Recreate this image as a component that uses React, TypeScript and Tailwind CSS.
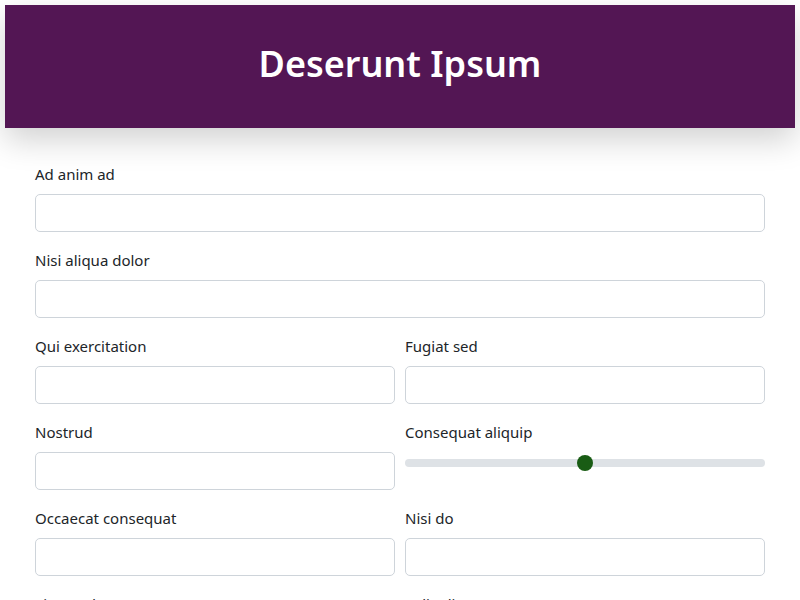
import { useState } from 'react';

const font = { fontFamily: '"Noto Sans", "Open Sans", sans-serif' };

function Field({ label }: { label: string }) {
    return (
        <div className="flex flex-col">
            <label className="text-[15px] leading-6 text-[#212529] mb-2">{label}</label>
            <input
                type="text"
                className="h-[38px] w-full rounded-[5px] border border-[#ced4da] bg-white px-3 outline-none"
            />
        </div>
    );
}

function RangeField({ label }: { label: string }) {
    const [value, setValue] = useState(50);
    return (
        <div className="flex flex-col">
            <label className="text-[15px] leading-6 text-[#212529] mb-2">{label}</label>
            <div className="relative h-[38px] w-full">
                <div className="absolute left-0 right-0 top-[7px] h-2 rounded-full bg-[#dee2e6]" />
                <div
                    className="absolute top-[3px] h-4 w-4 -translate-x-1/2 rounded-full bg-[#195c14]"
                    style={{ left: `${value}%` }}
                />
                <input
                    type="range"
                    min={0}
                    max={100}
                    value={value}
                    onChange={(e) => setValue(Number(e.target.value))}
                    className="absolute left-0 top-0 h-[22px] w-full cursor-pointer opacity-0"
                />
            </div>
        </div>
    );
}

export default function App() {
    return (
        <div className="min-h-screen bg-white p-[5px]" style={font}>
            <header className="flex h-[123px] items-center justify-center bg-[#531654] pb-[6px] shadow-[0_12px_30px_rgba(0,0,0,0.18)]">
                <h1 className="text-[36px] font-semibold leading-none text-white">Deserunt Ipsum</h1>
            </header>

            <form className="flex flex-col gap-4 px-[30px] pt-[34px]">
                <Field label="Ad anim ad" />
                <Field label="Nisi aliqua dolor" />
                <div className="grid grid-cols-2 gap-x-[10px] gap-y-4">
                    <Field label="Qui exercitation" />
                    <Field label="Fugiat sed" />
                    <Field label="Nostrud" />
                    <RangeField label="Consequat aliquip" />
                    <Field label="Occaecat consequat" />
                    <Field label="Nisi do" />
                    <Field label="Eiusmod" />
                    <Field label="Velit aliqua" />
                </div>
            </form>
        </div>
    );
}
